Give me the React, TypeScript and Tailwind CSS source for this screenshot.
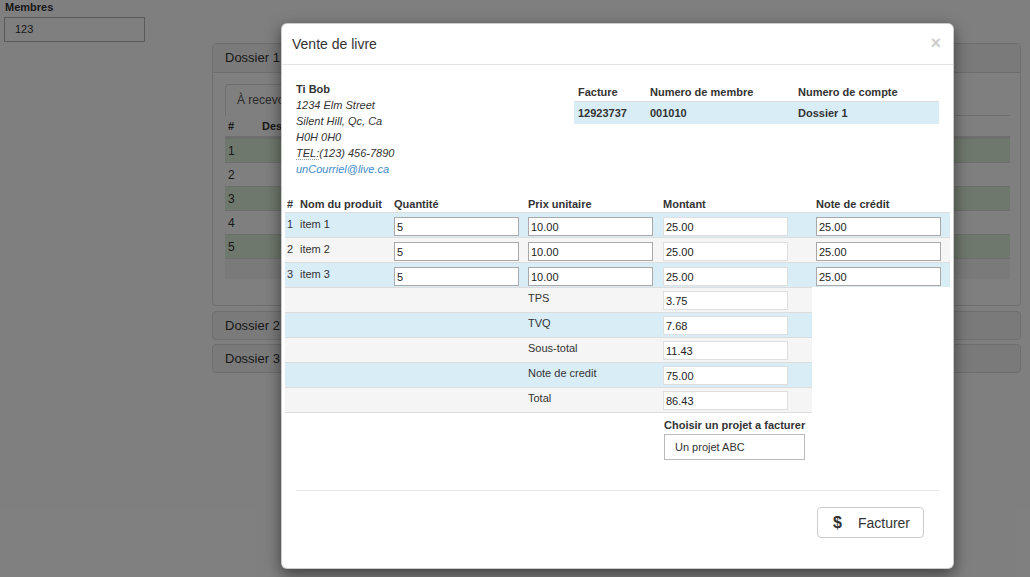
const items = [
  { n: 1, name: "item 1", blue: true },
  { n: 2, name: "item 2", blue: false },
  { n: 3, name: "item 3", blue: true },
]

const totals = [
  { label: "TPS", value: "3.75", blue: false },
  { label: "TVQ", value: "7.68", blue: true },
  { label: "Sous-total", value: "11.43", blue: false },
  { label: "Note de credit", value: "75.00", blue: true },
  { label: "Total", value: "86.43", blue: false },
]

const bgRows = [
  { n: "1", green: true },
  { n: "2", green: false },
  { n: "3", green: true },
  { n: "4", green: false },
  { n: "5", green: true },
]

function Field({ value, soft }: { value: string; soft?: boolean }) {
  return (
    <input
      readOnly
      defaultValue={value}
      className={
        soft
          ? "block w-[125px] h-[19px] px-[2px] text-[11px] text-[#222] bg-white outline-none border border-[#dedede]"
          : "block w-[125px] h-[19px] px-[2px] text-[11px] text-[#222] bg-white outline-none border border-[#a9a9a9]"
      }
    />
  )
}

function PanelHead({ title, last }: { title: string; last?: boolean }) {
  return (
    <div className={last ? "ml-[212px] mt-[4px] w-[809px] h-[29px] rounded-[4px] border border-[#ddd] bg-[#f5f5f5] pl-[12px] text-[13px] leading-[27px]" : "ml-[212px] mt-[5px] w-[809px] h-[29px] rounded-[4px] border border-[#ddd] bg-[#f5f5f5] pl-[12px] text-[13px] leading-[27px]"}>
      {title}
    </div>
  )
}

export default function App() {
  return (
    <div className="relative w-[1030px] h-[577px] overflow-hidden bg-white text-[#333] font-['Liberation_Sans',Arial,sans-serif]">
      {/* page behind the modal */}
      <div className="pl-[5px] text-[11px] font-bold leading-[14px]">Membres</div>
      <div className="ml-[4px] mt-[3px] w-[141px] h-[25px] border border-[#b5b5b5] pl-[10px] text-[11px] leading-[23px]">123</div>

      <div className="ml-[212px] mt-px w-[809px] rounded-[4px] border border-[#ddd]">
        <div className="h-[29px] bg-[#f5f5f5] border-b border-[#ddd] pl-[12px] text-[13px] leading-[28px]">Dossier 1</div>
        <div className="pt-[11px] pl-[12px] pr-[10px] pb-[26px]">
          <div className="flex h-[32px] border-b border-[#ddd]">
            <div className="-mb-px h-[32px] px-[11px] rounded-t-[4px] border border-[#ddd] border-b-white bg-white text-[12px] leading-[30px] text-[#555]">À recevoir</div>
            <div className="h-[32px] px-[11px] text-[12px] leading-[30px] text-[#428bca]">Reçu</div>
          </div>
          <div className="flex items-center h-[22px] border-b-2 border-[#ddd] text-[11px] font-bold">
            <div className="w-[37px] pl-[3px]">#</div>
            <div>Description</div>
          </div>
          {bgRows.map((r) => (
            <div key={r.n} className={r.green ? "flex items-center h-[24px] border-t border-[#ddd] bg-[#dff0d8] text-[12px]" : "flex items-center h-[24px] border-t border-[#ddd] text-[12px]"}>
              <div className="pl-[3px]">{r.n}</div>
            </div>
          ))}
          <div className="h-[21px] border-t border-[#ddd] bg-[#f5f5f5]" />
        </div>
      </div>
      <PanelHead title="Dossier 2" />
      <PanelHead title="Dossier 3" last />

      {/* backdrop + modal */}
      <div className="absolute inset-0 bg-black/50">
        <div className="absolute left-[281px] top-[23px] w-[673px] rounded-[6px] border border-black/20 bg-white shadow-[0_5px_15px_rgba(0,0,0,0.5)]">
          <div className="flex items-center justify-between h-[41px] border-b border-[#e5e5e5] pl-[10px] pr-[12px]">
            <h4 className="text-[14px] text-[#333]">Vente de livre</h4>
            <span className="-mt-[2px] text-[18px] font-bold leading-none text-black opacity-20">×</span>
          </div>

          <div className="px-[14px] pt-[16px]">
            <div className="flex justify-between">
              <div className="text-[11px] leading-[16px]">
                <div className="font-bold">Ti Bob</div>
                <div className="italic">1234 Elm Street</div>
                <div className="italic">Silent Hill, Qc, Ca</div>
                <div className="italic">H0H 0H0</div>
                <div className="italic">
                  <abbr title="Telephone" className="no-underline border-b border-dotted border-[#999]">TEL:</abbr>(123) 456-7890
                </div>
                <div className="italic text-[#428bca]">unCourriel@live.ca</div>
              </div>
              <div className="mt-[2px] w-[365px] text-[11px] font-bold">
                <div className="grid grid-cols-[72px_148px_145px] items-center h-[19px] border-b border-[#ddd]">
                  <div className="pl-[4px]">Facture</div>
                  <div className="pl-[4px]">Numero de membre</div>
                  <div className="pl-[4px]">Numero de compte</div>
                </div>
                <div className="grid grid-cols-[72px_148px_145px] items-center h-[22px] bg-[#d9edf7]">
                  <div className="pl-[4px]">12923737</div>
                  <div className="pl-[4px]">001010</div>
                  <div className="pl-[4px]">Dossier 1</div>
                </div>
              </div>
            </div>

            <div className="-mx-[11px] mt-[19px] text-[11px]">
              <div className="grid grid-cols-[12px_93px_134px_135px_153px_137px] items-center h-[16px] font-bold">
                <div className="pl-[2px]">#</div>
                <div className="pl-[3px]">Nom du produit</div>
                <div className="pl-[4px]">Quantité</div>
                <div className="pl-[4px]">Prix unitaire</div>
                <div className="pl-[4px]">Montant</div>
                <div className="pl-[4px]">Note de crédit</div>
              </div>
              {items.map((it) => (
                <div key={it.n} className={it.blue ? "grid grid-cols-[12px_93px_134px_135px_153px_137px] h-[25px] border-t border-[#ddd] bg-[#d9edf7]" : "grid grid-cols-[12px_93px_134px_135px_153px_137px] h-[25px] border-t border-[#ddd] bg-[#f5f5f5]"}>
                  <div className="pl-[2px] pt-[4px] leading-[15px]">{it.n}</div>
                  <div className="pl-[3px] pt-[4px] leading-[15px]">{it.name}</div>
                  <div className="pl-[4px] pt-[4px]"><Field value="5" /></div>
                  <div className="pl-[4px] pt-[4px]"><Field value="10.00" /></div>
                  <div className="pl-[4px] pt-[4px]"><Field value="25.00" soft /></div>
                  <div className="pl-[4px] pt-[4px]"><Field value="25.00" /></div>
                </div>
              ))}
              <div className="w-[527px] border-b border-[#ddd]">
                {totals.map((t) => (
                  <div key={t.label} className={t.blue ? "grid grid-cols-[239px_135px_153px] h-[25px] border-t border-[#ddd] bg-[#d9edf7]" : "grid grid-cols-[239px_135px_153px] h-[25px] border-t border-[#ddd] bg-[#f5f5f5]"}>
                    <div />
                    <div className="pl-[4px] pt-[3px] leading-[14px]">{t.label}</div>
                    <div className="pl-[4px] pt-[3px]"><Field value={t.value} soft /></div>
                  </div>
                ))}
              </div>
              <div className="ml-[379px] mt-[5px]">
                <div className="text-[11px] font-bold leading-[14px]">Choisir un projet a facturer</div>
                <div className="mt-[2px] w-[141px] h-[26px] border border-[#bbb] pl-[10px] text-[11px] leading-[24px]">Un projet ABC</div>
              </div>
            </div>

            <div className="mt-[30px] border-t border-[#e5e5e5] pt-[16px] pb-[30px] flex justify-end">
              <button className="mr-[15px] flex items-center w-[107px] h-[31px] rounded-[4px] border border-[#ccc] bg-white pl-[15px] text-[#333]">
                <span className="text-[16px] font-bold leading-none">$</span>
                <span className="ml-[16px] text-[14px] leading-none">Facturer</span>
              </button>
            </div>
          </div>
        </div>
      </div>
    </div>
  )
}
